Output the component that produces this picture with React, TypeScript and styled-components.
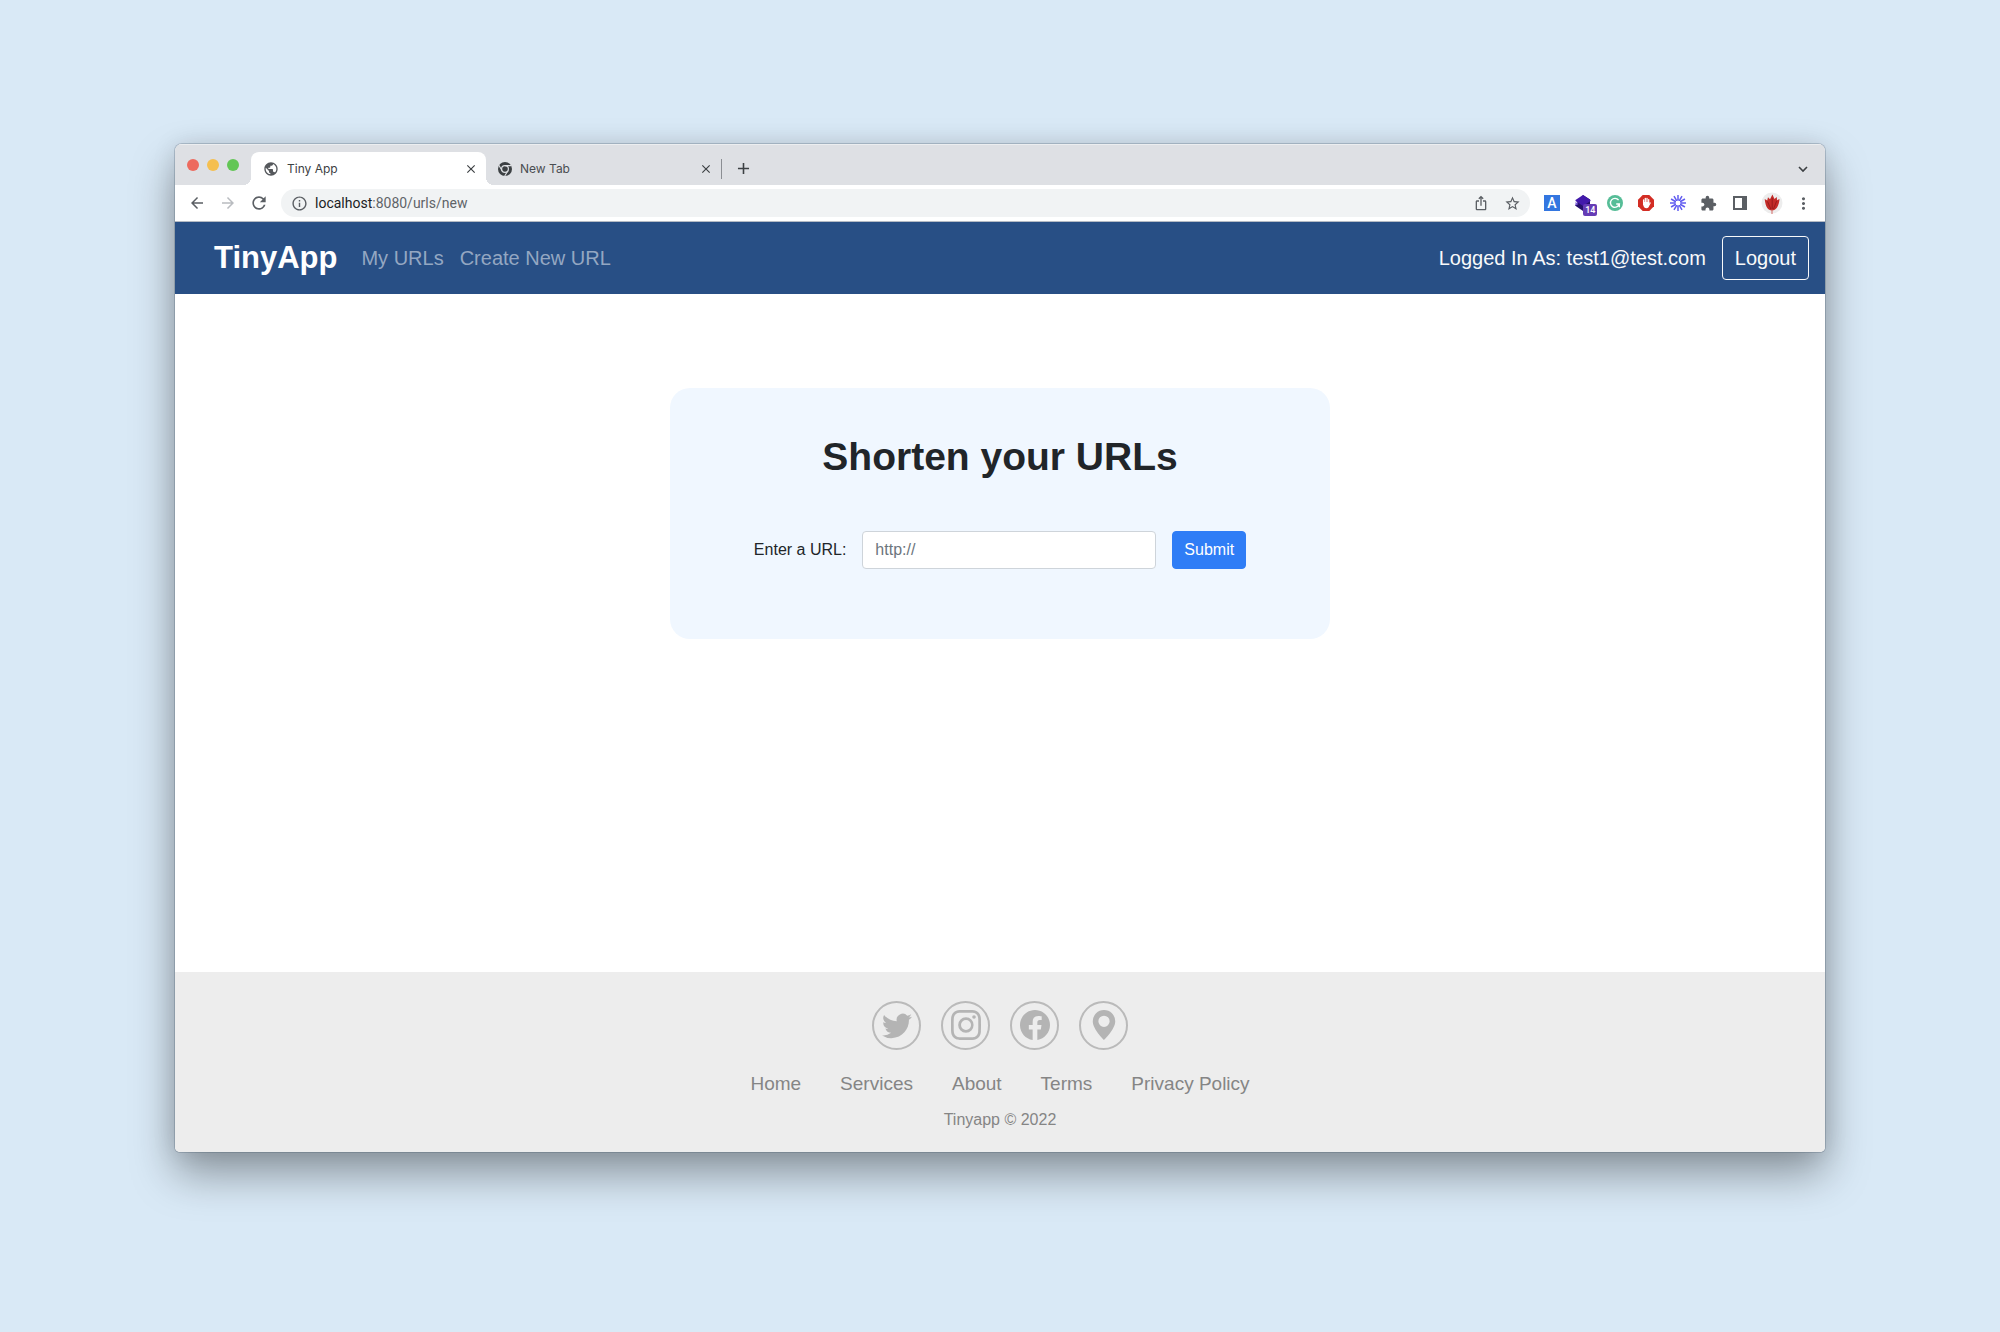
import React from "react";
import styled, { createGlobalStyle } from "styled-components";
import {
  MdAdd,
  MdArrowBack,
  MdArrowForward,
  MdClose,
  MdExtension,
  MdInfoOutline,
  MdIosShare,
  MdMoreVert,
  MdPublic,
  MdRefresh,
  MdStarBorder,
} from "react-icons/md";
import { BsFacebook, BsGeoAltFill, BsInstagram, BsTwitter } from "react-icons/bs";

const sans = '"Helvetica Neue", "Liberation Sans", Arial, sans-serif';

const GlobalStyle = createGlobalStyle`
  *, *::before, *::after { box-sizing: border-box; }
  body {
    margin: 0;
    background: #d9e9f6;
    font-family: ${sans};
    font-size: 16px;
    line-height: 24px;
    color: #212529;
  }
  button { font: inherit; cursor: pointer; }
  a { text-decoration: none; }
`;

const Desktop = styled.div`
  display: flex;
  min-height: 100vh;
  padding: 144px 175px 180px;
`;

const BrowserWindow = styled.div`
  flex: 1;
  min-width: 0;
  display: flex;
  flex-direction: column;
  overflow: hidden;
  border-radius: 7px 7px 5px 5px;
  background: #fff;
  box-shadow: 0 0 0 1px rgba(60, 80, 100, 0.25), 0 22px 44px rgba(0, 0, 0, 0.36), 0 0 24px rgba(0, 0, 0, 0.1);
`;

const TabStrip = styled.div`
  display: flex;
  align-items: flex-end;
  height: 41px;
  padding: 0 12px;
  background: #dee0e4;
  box-shadow: inset 0 1px #eceef0;
`;

const TrafficLights = styled.div`
  display: flex;
  align-items: center;
  align-self: center;
  gap: 8px;
  margin-right: 12px;
`;

const Light = styled.button<{ $color: string }>`
  width: 12px;
  height: 12px;
  padding: 0;
  border: 0;
  border-radius: 50%;
  background: ${(p) => p.$color};
`;

const Tab = styled.div<{ $active?: boolean }>`
  position: relative;
  display: flex;
  align-items: center;
  gap: 8px;
  width: 235px;
  height: 33px;
  padding: 0 9px 0 12px;
  border-radius: 8px 8px 0 0;
  background: ${(p) => (p.$active ? "#fff" : "transparent")};
  color: ${(p) => (p.$active ? "#3c4043" : "#4a4d51")};
  font: 12px/16px Inter, Roboto, sans-serif;
  & > svg { flex: none; color: #55585c; }

  &::before,
  &::after {
    content: "";
    display: ${(p) => (p.$active ? "block" : "none")};
    position: absolute;
    bottom: 0;
    width: 8px;
    height: 8px;
  }
  &::before {
    right: 100%;
    background: radial-gradient(circle at 0 0, transparent 8px, #fff 8px);
  }
  &::after {
    left: 100%;
    background: radial-gradient(circle at 100% 0, transparent 8px, #fff 8px);
  }
`;

const TabTitle = styled.span`
  flex: 1;
`;

const IconButton = styled.button<{ $faded?: boolean }>`
  display: flex;
  flex: none;
  align-items: center;
  justify-content: center;
  width: 20px;
  height: 20px;
  padding: 0;
  border: 0;
  background: none;
  color: ${(p) => (p.$faded ? "#b9bcc0" : "#5b5f64")};
  & > svg { flex: none; overflow: visible; }
`;

const TabClose = styled(IconButton)`
  width: 13px;
  color: #3c4043;
`;

const StripEnd = styled.div`
  flex: 1;
  display: flex;
  align-items: center;
  justify-content: space-between;
  height: 33px;
`;

const NewTab = styled.div`
  display: flex;
  align-items: center;
  gap: 11px;
  &::before {
    content: "";
    width: 1px;
    height: 20px;
    background: #8b8e93;
  }
`;

const Toolbar = styled.div`
  display: flex;
  align-items: center;
  height: 37px;
  padding: 0 12px;
  border-bottom: 1px solid #b5bbc4;
`;

const NavButtons = styled.div`
  display: flex;
  gap: 11px;
  margin-right: 12px;
`;

const AddressBar = styled.form`
  flex: 1;
  display: flex;
  align-items: center;
  gap: 11px;
  height: 28px;
  padding: 0 8px;
  border-radius: 14px;
  background: #f1f3f4;
`;

const Address = styled.div`
  flex: 1;
  margin-left: -5px;
  color: #5f6368;
  font: 14px/20px Roboto, sans-serif;
  b { color: #202124; font-weight: 400; }
`;

const Extensions = styled.div`
  display: flex;
  align-items: center;
  justify-content: space-between;
  width: 271px;
  margin-left: 12px;
`;

const Navbar = styled.nav`
  display: flex;
  align-items: center;
  height: 72px;
  padding: 0 16px 0 39px;
  background: #284f85;
  font-size: 20px;
`;

const Brand = styled.a`
  margin-right: 24px;
  color: #fff;
  font-size: 31px;
  line-height: 48px;
  font-weight: 700;
`;

const NavLinks = styled.div`
  flex: 1;
  display: flex;
  gap: 16px;
`;

const NavLink = styled.a`
  color: #94a7c2;
`;

const Account = styled.form`
  display: flex;
  align-items: center;
  gap: 16px;
  color: #f8f9fa;
`;

const LogoutButton = styled.button`
  height: 44px;
  padding: 0 12px;
  border: 1px solid #f8f9fa;
  border-radius: 4px;
  background: transparent;
  color: #f8f9fa;
`;

const Main = styled.main`
  flex: 1;
  padding: 94px 0 40px;
`;

const Card = styled.section`
  display: flex;
  flex-direction: column;
  align-items: center;
  gap: 50px;
  width: 40%;
  margin: 0 auto;
  padding: 45px 0 70px;
  border-radius: 20px;
  background: #f0f7ff;
`;

const Heading = styled.h1`
  margin: 0;
  font-size: 39px;
  line-height: 48px;
  font-weight: 700;
`;

const UrlForm = styled.form`
  display: flex;
  align-items: center;
  gap: 16px;
`;

const UrlInput = styled.input`
  width: 294px;
  height: 38px;
  padding: 0 12px;
  border: 1px solid #ced4da;
  border-radius: 4px;
  background: #fff;
  font: inherit;
  color: #495057;
  &::placeholder { color: #6c757d; opacity: 1; }
`;

const SubmitButton = styled.button`
  height: 38px;
  padding: 0 11px;
  border: 1px solid #2f7df6;
  border-radius: 4px;
  background: #2f7df6;
  color: #fff;
`;

const Footer = styled.footer`
  display: flex;
  flex-direction: column;
  align-items: center;
  padding: 29px 0 20px;
  background: #ededed;
  color: #858585;
`;

const SocialLinks = styled.div`
  display: flex;
  gap: 20px;
  margin-bottom: 22px;
`;

const SocialLink = styled.a`
  display: flex;
  align-items: center;
  justify-content: center;
  width: 49px;
  height: 49px;
  padding-bottom: 2px;
  border: 2px solid #bababa;
  border-radius: 50%;
  color: #b4b4b4;
`;

const FooterLinks = styled.div`
  display: flex;
  gap: 39px;
  margin-bottom: 12px;
`;

const FooterLink = styled.a`
  color: #858585;
  font-size: 19px;
`;

const Copyright = styled.p`
  margin: 0;
`;

const LetterBadge = styled.span`
  width: 16px;
  height: 16px;
  background: #3376e0;
  color: #fff;
  font: 500 14px/16px Roboto, sans-serif;
`;

const Counted = styled.span`
  position: relative;
  display: flex;
`;

const CountBadge = styled.span`
  position: absolute;
  top: 9px;
  left: 8px;
  width: 14px;
  height: 12px;
  border-radius: 2px;
  background: #653cb5;
  color: #fff;
  font: 500 9px/12px Roboto, sans-serif;
`;

const ChromeIcon = () => (
  <svg width="14" height="14" viewBox="0 0 14 14">
    <circle cx="7" cy="7" r="7" fill="#3c4043" />
    <circle cx="7" cy="7" r="3.400" fill="#3c4043" stroke="#dee0e4" strokeWidth="1.200" />
    <path d="M7 3.600h6.400M4.100 8.700.9 3.200M9.900 8.700 6.700 14" stroke="#dee0e4" strokeWidth="1.100" />
  </svg>
);

const LayersIcon = () => (
  <svg width="16" height="16" viewBox="0 0 16 16">
    <path d="M8 0 15 4.500v7L8 16 0 10.500z" fill="#24106b" />
    <path d="M8 0 15.500 5v1L8 11 .5 6V5z" fill="#4219ab" />
    <path d="m.5 7 3 2-3 1.500z" fill="#7c5cdb" />
  </svg>
);

const WritingIcon = () => (
  <svg width="16" height="16" viewBox="0 0 16 16">
    <circle cx="8" cy="8" r="8" fill="#56bd97" />
    <path d="M11.600 5.200A4.500 4.500 0 1 0 12.300 9H9.200M12.300 9v3.200" fill="none" stroke="#fff" strokeWidth="1.400" />
  </svg>
);

const BlockerIcon = () => (
  <svg width="16" height="16" viewBox="0 0 16 16">
    <path d="M4.700 0h6.600L16 4.700v6.600L11.300 16H4.700L0 11.300V4.700z" fill="#d32d24" />
    <path d="M5.600 8V4.900M7.300 7V3.300M9 7V3.300M10.700 8V4.600" stroke="#fff" strokeWidth="1.300" strokeLinecap="round" />
    <path d="M5 7h6.300v2.800c0 2.100-1 3.500-2.900 3.500-1.500 0-2.300-.8-2.800-2L5 9.500z" fill="#fff" />
    <path d="m11 10 1.200-2" stroke="#fff" strokeWidth="1.200" strokeLinecap="round" />
  </svg>
);

const BurstIcon = () => (
  <svg width="16" height="16" viewBox="0 0 16 16">
    {Array.from({ length: 12 }, (_, i) => (
      <path key={i} d="M8 0v5" stroke="#615cf0" strokeWidth="1.500" transform={`rotate(${i * 30} 8 8)`} />
    ))}
    <circle cx="8" cy="8" r="3" fill="none" stroke="#615cf0" strokeWidth="1" />
  </svg>
);

const PanelIcon = () => (
  <svg width="14" height="14" viewBox="0 0 14 14">
    <path d="M0 0h14v14H0zM2 2v10h7V2z" fill="currentColor" fillRule="evenodd" />
  </svg>
);

const AvatarIcon = () => (
  <svg width="20" height="20" viewBox="0 0 20 20">
    <circle cx="10" cy="10" r="10.500" fill="#ededed" />
    <path
      d="M10 17.500C6 17.500 3.500 14 2.700 6l2.500 1.600L6 4.200l2 2L10.400 1.500 12.500 6l2.300-2 .2 3.300L17.500 6C17 13 14 17.500 10 17.500z"
      fill="#c32b28"
    />
    <path d="M10.200 5v11.500M5.500 8.500 8.800 16M14.600 8 11.500 16" stroke="#8f1616" strokeWidth=".8" fill="none" />
    <path d="M10 16.500V21" stroke="#d36b66" strokeWidth="1" />
  </svg>
);

const ChevronIcon = () => (
  <svg width="10" height="6" viewBox="0 0 10 6">
    <path d="m1 1 4 4 4-4" fill="none" stroke="#3c4043" strokeWidth="1.600" />
  </svg>
);

const lights = [
  { label: "Close window", color: "#ed6a5e" },
  { label: "Minimize window", color: "#f5bf4f" },
  { label: "Zoom window", color: "#62c655" },
];

const socials = [
  { label: "Twitter", Icon: BsTwitter },
  { label: "Instagram", Icon: BsInstagram },
  { label: "Facebook", Icon: BsFacebook },
  { label: "Location", Icon: BsGeoAltFill },
];

const footerLinks = ["Home", "Services", "About", "Terms", "Privacy Policy"];

export default function App() {
  const stop = (e: React.FormEvent) => e.preventDefault();
  return (
    <>
      <GlobalStyle />
      <Desktop>
        <BrowserWindow>
          <TabStrip>
            <TrafficLights>
              {lights.map((l) => (
                <Light key={l.label} $color={l.color} aria-label={l.label} />
              ))}
            </TrafficLights>
            <Tab $active>
              <MdPublic size={16} />
              <TabTitle>Tiny App</TabTitle>
              <TabClose aria-label="Close tab"><MdClose size={14} /></TabClose>
            </Tab>
            <Tab>
              <ChromeIcon />
              <TabTitle>New Tab</TabTitle>
              <TabClose aria-label="Close tab"><MdClose size={14} /></TabClose>
            </Tab>
            <StripEnd>
              <NewTab>
                <IconButton aria-label="New tab"><MdAdd size={19} color="#3c4043" /></IconButton>
              </NewTab>
              <IconButton aria-label="Search tabs"><ChevronIcon /></IconButton>
            </StripEnd>
          </TabStrip>

          <Toolbar>
            <NavButtons>
              <IconButton aria-label="Back"><MdArrowBack size={18} /></IconButton>
              <IconButton aria-label="Forward" $faded><MdArrowForward size={18} /></IconButton>
              <IconButton aria-label="Reload"><MdRefresh size={20} /></IconButton>
            </NavButtons>
            <AddressBar onSubmit={stop}>
              <IconButton type="button" aria-label="Site information"><MdInfoOutline size={17} /></IconButton>
              <Address><b>localhost</b>:8080/urls/new</Address>
              <IconButton type="button" aria-label="Share"><MdIosShare size={16} /></IconButton>
              <IconButton type="button" aria-label="Bookmark"><MdStarBorder size={17} /></IconButton>
            </AddressBar>
            <Extensions>
              <IconButton aria-label="Translate"><LetterBadge>A</LetterBadge></IconButton>
              <IconButton aria-label="Layers">
                <Counted><LayersIcon /><CountBadge>14</CountBadge></Counted>
              </IconButton>
              <IconButton aria-label="Writing assistant"><WritingIcon /></IconButton>
              <IconButton aria-label="Blocker"><BlockerIcon /></IconButton>
              <IconButton aria-label="Recorder"><BurstIcon /></IconButton>
              <IconButton aria-label="Extensions"><MdExtension size={17} /></IconButton>
              <IconButton aria-label="Side panel"><PanelIcon /></IconButton>
              <IconButton aria-label="Profile"><AvatarIcon /></IconButton>
              <IconButton aria-label="Menu"><MdMoreVert size={19} /></IconButton>
            </Extensions>
          </Toolbar>

          <Navbar>
            <Brand href="#">TinyApp</Brand>
            <NavLinks>
              <NavLink href="#urls">My URLs</NavLink>
              <NavLink href="#new">Create New URL</NavLink>
            </NavLinks>
            <Account onSubmit={stop}>
              <span>Logged In As: test1@test.com</span>
              <LogoutButton>Logout</LogoutButton>
            </Account>
          </Navbar>

          <Main>
            <Card>
              <Heading>Shorten your URLs</Heading>
              <UrlForm onSubmit={stop}>
                <label htmlFor="long-url">Enter a URL:</label>
                <UrlInput id="long-url" type="text" placeholder="http://" />
                <SubmitButton type="submit">Submit</SubmitButton>
              </UrlForm>
            </Card>
          </Main>

          <Footer>
            <SocialLinks>
              {socials.map(({ label, Icon }) => (
                <SocialLink key={label} href="#" aria-label={label}><Icon size={30} /></SocialLink>
              ))}
            </SocialLinks>
            <FooterLinks>
              {footerLinks.map((name) => (
                <FooterLink key={name} href="#">{name}</FooterLink>
              ))}
            </FooterLinks>
            <Copyright>Tinyapp © 2022</Copyright>
          </Footer>
        </BrowserWindow>
      </Desktop>
    </>
  );
}
